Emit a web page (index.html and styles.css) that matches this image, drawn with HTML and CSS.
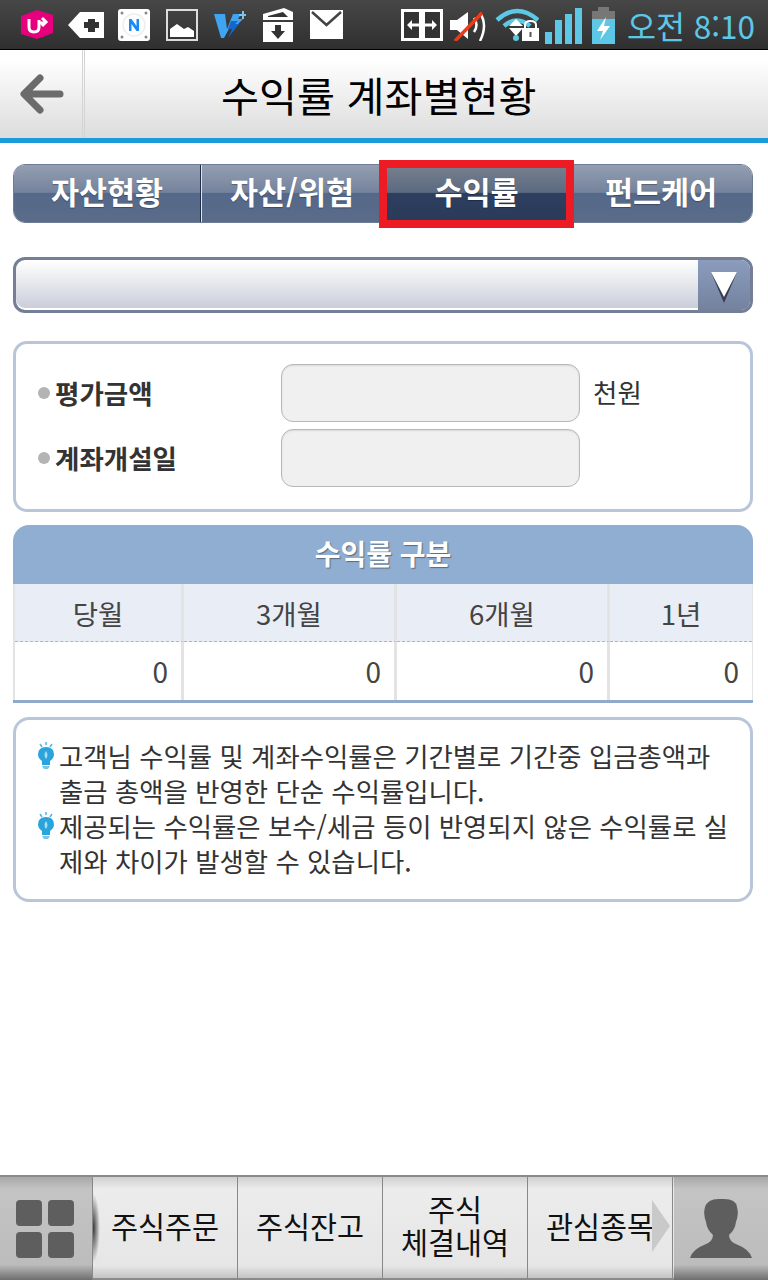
FILE: index.html
```html
<!DOCTYPE html>
<html lang="ko">
<head>
  <meta charset="UTF-8" />
  <meta name="viewport" content="width=device-width, initial-scale=1.0"/>
  <title>수익률 계좌별현황</title>
  <link rel="stylesheet" href="styles.css">
</head>
<body>
  <div class="page">

    <!-- Status bar -->
    <div class="status-bar">
      <div class="status-left">
        <svg width="32" height="30" viewBox="0 0 32 30"><path d="M16 0 32 5V23L16 29 0 24V6Z" fill="#e6007e"/><path d="M8 9V17Q8 22 13 22T18 17V10M18 13H24M21 8 25 12 21 16" fill="none" stroke="#fff" stroke-width="3"/></svg>
        <svg class="tag-icon" width="36" height="30" viewBox="0 0 36 30"><path d="M12 2H36V28H12L0 15Z" fill="#fff"/><path d="M20 9H27V12H31V18H27V22H20V18H16V12H20Z" fill="#333"/></svg>
        <svg width="32" height="32" viewBox="0 0 32 32"><rect width="32" height="32" rx="3" fill="#fff"/><circle cx="16" cy="16" r="11" fill="none" stroke="#eee" stroke-width="1.5"/><circle cx="4" cy="4" r="1.5" fill="#888"/><circle cx="28" cy="4" r="1.5" fill="#888"/><circle cx="4" cy="28" r="1.5" fill="#888"/><circle cx="28" cy="28" r="1.5" fill="#888"/><path d="M11 22V10H13.500L18.500 17V10H21V22H18.500L13.500 15V22Z" fill="#1a8cf0"/></svg>
        <svg width="32" height="32" viewBox="0 0 32 32"><rect x="1" y="1" width="30" height="30" fill="none" stroke="#ddd" stroke-width="2"/><path d="M4 28V20L11 15 18 20 22 18 28 22V28Z" fill="#fff"/></svg>
        <svg width="32" height="28" viewBox="0 0 32 28"><path d="M0 3H11L13 18 19 3H27L24 8H29L23 14 16 16 10 27H7Z" fill="#3fa4f2"/><path d="M17 10H24L21 13H25L14 27 18 18H14Z" fill="#1467c8"/><path d="M25 3H28V0H30V3H32V5H30V8H28V5H25Z" fill="#7fc4ee"/></svg>
        <svg width="32" height="34" viewBox="0 0 32 34"><path d="M1 6 22 0 31 4V12H1Z" fill="#fff"/><path d="M6 8 21 4 26 9H6Z" fill="#333"/><rect x="1" y="14" width="30" height="20" fill="#fff"/><path d="M13 17H19V23H23L16 31 9 23H13Z" fill="#333"/></svg>
        <svg width="33" height="30" viewBox="0 0 33 30"><rect width="33" height="29" fill="#fff"/><path d="M2 2 16.500 15 31 2" fill="none" stroke="#444" stroke-width="2.500"/></svg>
      </div>
      <div class="status-right">
        <svg width="42" height="32" viewBox="0 0 42 32"><path d="M1.500 1.500H19.500V30.500H1.500ZM22.500 1.500H40.500V30.500H22.500Z" fill="#333" stroke="#fff" stroke-width="3"/><path d="M20 2H22V30H20Z" fill="#fff"/><path d="M6 16 11 11V14.500H20V17.500H11V21ZM36 16 31 11V14.500H22V17.500H31V21Z" fill="#fff"/></svg>
        <svg width="38" height="32" viewBox="0 0 38 32"><path d="M0 11H7L18 3V30L7 21H0Z" fill="#fff"/><path d="M24 9Q29 16 24 23M30 4Q38 16 30 32" fill="none" stroke="#fff" stroke-width="2.500"/><path d="M5 32 32 4" stroke="#f03a17" stroke-width="3.500"/></svg>
        <svg width="44" height="34" viewBox="0 0 44 34"><path d="M2 12Q22-6 43 12M9 18Q22 7 35 18" fill="none" stroke="#5cc8e6" stroke-width="4.500"/><path d="M21 11 28 18H14ZM21 28 14 20H28Z" fill="#fff"/><circle cx="21" cy="30" r="3" fill="#5cc8e6"/><rect x="27" y="20" width="17" height="13" fill="#fff"/><path d="M30 20V17Q30 13 35.500 13T41 17V20" fill="none" stroke="#fff" stroke-width="2"/><rect x="34.500" y="24" width="2" height="5" fill="#555"/></svg>
        <div class="signal"><span class="bar-1"></span><span class="bar-2"></span><span class="bar-3"></span><span class="bar-4"></span></div>
        <svg class="battery" width="23" height="37" viewBox="0 0 23 37"><rect x="6" width="11" height="6" fill="#777"/><rect y="4" width="23" height="8" fill="#777"/><rect y="12" width="23" height="25" fill="#5cc8e6"/><path d="M14 10 5 24H11L8 33 18 19H12Z" fill="#fff"/></svg>
        <span class="clock">오전 8:10</span>
      </div>
    </div>

    <!-- Title -->
    <header class="title-bar">
      <div class="back-btn">
        <svg width="44" height="40" viewBox="0 0 44 40"><path d="M20 4 4 20 20 36M5 20H40" fill="none" stroke="#6b6b6b" stroke-width="7" stroke-linecap="round" stroke-linejoin="round"/></svg>
      </div>
      <h1>수익률 계좌별현황</h1>
    </header>

    <main class="content">
      <!-- Tabs -->
      <div class="tabs">
        <div class="tab tab-first">자산현황</div>
        <div class="tab tab-second">자산/위험</div>
        <div class="tab tab-active">수익률</div>
        <div class="tab tab-last">펀드케어</div>
      </div>

      <!-- Account select -->
      <div class="select-box">
        <div class="select-arrow">
          <svg width="28" height="34" viewBox="0 0 28 34"><path d="M1 1H27L14 32Z" fill="#363d4c"/><path d="M1 1H27L14 26Z" fill="#fff"/></svg>
        </div>
      </div>

      <!-- Account summary -->
      <section class="info-box">
        <div class="info-row">
          <span class="info-label">평가금액</span>
          <div class="info-field"></div>
          <span class="info-unit">천원</span>
        </div>
        <div class="info-row">
          <span class="info-label">계좌개설일</span>
          <div class="info-field"></div>
        </div>
      </section>

      <!-- Return table -->
      <section class="return-table">
        <div class="table-title">수익률 구분</div>
        <div class="table-grid">
          <div class="cell-head">당월</div>
          <div class="cell-head">3개월</div>
          <div class="cell-head">6개월</div>
          <div class="cell-head">1년</div>
          <div class="cell-value">0</div>
          <div class="cell-value">0</div>
          <div class="cell-value">0</div>
          <div class="cell-value">0</div>
        </div>
      </section>

      <!-- Notes -->
      <section class="note-box">
        <div class="note">
          <svg class="bulb" width="18" height="29" viewBox="0 0 18 29"><path d="M3 3 5 6M9 1V4M15 3 13 6" stroke="#55b5e0" stroke-width="1.500"/><path d="M9 6Q17 6 17 13.500 17 17 13 20V24H5V20Q1 17 1 13.500 1 6 9 6Z" fill="#2ba3dc"/><path d="M9 10Q12 14 9 18 6 14 9 10Z" fill="#a8def2"/><path d="M5 25H13L11 28H7Z" fill="#7cc4e4"/></svg>
          <p>고객님 수익률 및 계좌수익률은 기간별로 기간중 입금총액과 출금 총액을 반영한 단순 수익률입니다.</p>
        </div>
        <div class="note">
          <svg class="bulb" width="18" height="29" viewBox="0 0 18 29"><path d="M3 3 5 6M9 1V4M15 3 13 6" stroke="#55b5e0" stroke-width="1.500"/><path d="M9 6Q17 6 17 13.500 17 17 13 20V24H5V20Q1 17 1 13.500 1 6 9 6Z" fill="#2ba3dc"/><path d="M9 10Q12 14 9 18 6 14 9 10Z" fill="#a8def2"/><path d="M5 25H13L11 28H7Z" fill="#7cc4e4"/></svg>
          <p>제공되는 수익률은 보수/세금 등이 반영되지 않은 수익률로 실제와 차이가 발생할 수 있습니다.</p>
        </div>
      </section>
    </main>

    <!-- Bottom menu -->
    <nav class="bottom-nav">
      <div class="nav-side nav-menu">
        <div class="menu-grid"><span></span><span></span><span></span><span></span></div>
      </div>
      <div class="nav-item">주식주문</div>
      <div class="nav-item">주식잔고</div>
      <div class="nav-item">주식<br>체결내역</div>
      <div class="nav-item nav-more">관심종목<span class="more-arrow"></span></div>
      <div class="nav-side nav-user">
        <svg width="62" height="62" viewBox="0 0 62 62"><path d="M15 9Q18 0 31 1 46 0 47 9 49 16 46 24 45 32 39 37 39 44 48 47 59 51 62 60H0Q3 51 14 47 23 44 23 37 17 32 16 24 13 16 15 9Z" fill="#5e5e5e"/></svg>
      </div>
    </nav>

  </div>
</body>
</html>
```

FILE: styles.css
```css
* {
  margin: 0;
  padding: 0;
  box-sizing: border-box;
  font-family: "Noto Sans CJK KR", "Noto Sans", sans-serif;
}

body {
  background: #fff;
  color: #333;
}

.page {
  width: 768px;
  height: 1280px;
  display: flex;
  flex-direction: column;
  overflow: hidden;
}

/* Status bar */
.status-bar {
  height: 50px;
  flex-shrink: 0;
  display: flex;
  justify-content: space-between;
  align-items: center;
  padding: 0 13px 0 21px;
  background: linear-gradient(#474747, #2f2f2f);
  border-bottom: 1px solid #000;
}

.status-left {
  display: flex;
  align-items: center;
  gap: 16px;
}

.tag-icon {
  margin: 0 -2px 0 -1px;
}

.status-right {
  display: flex;
  align-items: center;
  gap: 7px;
}

.signal {
  display: flex;
  align-items: flex-end;
  gap: 3px;
  height: 36px;
  margin: 2px 3px 0 -1px;
}

.signal span {
  width: 7px;
  background: #5cc8e6;
}

.bar-1 { height: 12px; }
.bar-2 { height: 24px; }
.bar-3 { height: 30px; }
.bar-4 { height: 36px; }

.battery {
  margin-top: 2px;
}

.clock {
  margin-left: 5px;
  font-size: 31.5px;
  line-height: 40px;
  color: #5cc8e6;
  white-space: nowrap;
}

/* Title */
.title-bar {
  height: 93px;
  flex-shrink: 0;
  display: flex;
  align-items: stretch;
  background: linear-gradient(#fff 10%, #dcdcdc);
  border-bottom: 5px solid #1a9bdc;
}

.back-btn {
  width: 85px;
  flex-shrink: 0;
  display: flex;
  align-items: center;
  padding-left: 20px;
  border-right: 3px double #d4d4d4;
}

.title-bar h1 {
  flex: 1;
  padding-left: 136px;
  font-size: 41.3px;
  font-weight: 400;
  line-height: 88px;
  color: #000;
  white-space: nowrap;
}

.content {
  flex: 1;
  padding: 21px 15px 0 13px;
}

/* Tabs */
.tabs {
  display: flex;
  height: 59px;
  margin-bottom: 34px;
  border: 1px solid #6d7d96;
  border-radius: 12px;
}

.tab {
  display: flex;
  align-items: center;
  justify-content: center;
  padding-bottom: 5px;
  font-size: 30.5px;
  font-weight: 700;
  color: #fff;
  background: linear-gradient(#939eb1, #74839c 48%, #55688a 50%, #5a6c89);
  text-shadow: 0 1px 1px rgba(0, 0, 0, 0.3);
}

.tab-first {
  width: 187px;
  border-radius: 11px 0 0 11px;
  border-right: 1px solid #1f2c44;
}

.tab-second {
  width: 182px;
  box-shadow: inset 1px 0 0 #dfe3ea;
}

.tab-active {
  position: relative;
  width: 187px;
  background: linear-gradient(#76808e, #5c6a80 48%, #2d3f60 50%, #2b3a58);
}

/* the red highlight lies over the tab */
.tab-active::after {
  content: "";
  position: absolute;
  inset: -5px -4px -6px -4px;
  border: 8px solid #ed1c24;
}

.tab-last {
  flex: 1;
  border-radius: 0 11px 11px 0;
}

/* Select */
.select-box {
  display: flex;
  justify-content: flex-end;
  height: 56px;
  margin-bottom: 28px;
  border: 3px solid #747f97;
  border-radius: 12px;
  background: linear-gradient(#fff, #c8ccd8);
  box-shadow: inset 0 -2px 0 #fff;
  overflow: hidden;
}

.select-arrow {
  width: 52px;
  display: flex;
  align-items: center;
  justify-content: center;
  padding-top: 5px;
  background: linear-gradient(#8b9cbd, #74829f);
}

/* Summary */
.info-box {
  height: 171px;
  display: flex;
  flex-direction: column;
  justify-content: center;
  gap: 7px;
  margin-bottom: 13px;
  padding-bottom: 2px;
  border: 3px solid #b9c6d9;
  border-radius: 14px;
}

.info-row {
  display: flex;
  align-items: center;
  height: 58px;
}

.info-label {
  position: relative;
  width: 265px;
  padding: 0 0 2px 39px;
  font-size: 26.5px;
  font-weight: 700;
  color: #333;
}

.info-label::before {
  content: "";
  position: absolute;
  left: 22px;
  top: 50%;
  width: 12px;
  height: 12px;
  margin-top: -6px;
  border-radius: 50%;
  background: #b4b4b4;
}

.info-field {
  width: 299px;
  height: 58px;
  border: 1px solid #b8b8b8;
  border-radius: 12px;
  background: #f0f0f0;
  box-shadow: inset 0 1px 2px rgba(0, 0, 0, 0.1);
}

.info-unit {
  margin-left: 13px;
  padding-bottom: 3px;
  font-size: 26.5px;
  color: #333;
}

/* Return table */
.return-table {
  margin-bottom: 14px;
  border-bottom: 3px solid #8faacb;
}

.table-title {
  height: 59px;
  border-radius: 16px 16px 0 0;
  background: #8faed2;
  text-align: center;
  font-size: 28px;
  font-weight: 700;
  line-height: 57px;
  color: #fff;
  text-shadow: 1px 1px 1px rgba(60, 60, 60, 0.6);
}

.table-grid {
  display: grid;
  grid-template-columns: 169px 213px 213px 1fr;
  border-left: 2px solid #e3e3e3;
  border-right: 1px solid #e3e3e3;
}

.cell-head,
.cell-value {
  border-right: 3px solid #e3e3e3;
  font-size: 28px;
  color: #444;
}

.cell-head {
  height: 58px;
  background: #e9edf5;
  border-bottom: 1px dashed #a9b6c8;
  text-align: center;
  font-size: 27.5px;
  line-height: 58px;
}

.cell-value {
  height: 58px;
  padding-right: 13px;
  text-align: right;
  line-height: 58px;
}

.cell-head:nth-child(4),
.cell-value:nth-child(8) {
  border-right: 0;
}

/* Notes */
.note-box {
  height: 185px;
  padding: 18px 20px 0 21px;
  border: 3px solid #b9c6d9;
  border-radius: 16px;
}

.note {
  position: relative;
  padding-left: 22px;
}

.note p {
  font-size: 26.4px;
  line-height: 35px;
  color: #333;
}

.bulb {
  position: absolute;
  left: 0;
  top: 3px;
}

/* Bottom menu */
.bottom-nav {
  display: flex;
  height: 105px;
  flex-shrink: 0;
  border-top: 2px solid #8a8a8a;
  border-bottom: 2px solid #8a8a8a;
  background: linear-gradient(#cfcfcf, #ececec 12%, #e6e6e6 88%, #c4c4c4);
}

.nav-side {
  display: flex;
  align-items: center;
  justify-content: center;
  margin-bottom: -2px;
  background: linear-gradient(#a8a8a8, #c4c4c4 12%, #bcbcbc 85%, #6e6e6e);
}

.nav-menu {
  position: relative;
  width: 93px;
  padding-right: 3px;
  border-right: 1px solid #888;
}

/* dark glow at the edge of the menu button */
.nav-menu::after {
  content: "";
  position: absolute;
  left: 100%;
  top: 16px;
  width: 7px;
  height: 70px;
  margin-left: 1px;
  background: radial-gradient(ellipse at left center, #333, rgba(80, 80, 80, 0) 70%);
}

.nav-user {
  flex: 1;
  margin-left: 1px;
}

.menu-grid {
  display: grid;
  grid-template-columns: 26px 26px;
  grid-auto-rows: 26px;
  gap: 6px;
}

.menu-grid span {
  border-radius: 4px;
  background: #5e5e5e;
}

.nav-item {
  position: relative;
  width: 145px;
  display: flex;
  align-items: center;
  justify-content: center;
  padding-bottom: 5px;
  text-align: center;
  font-size: 29.4px;
  line-height: 33px;
  color: #111;
  border-right: 1px solid #888;
}

.nav-more {
  justify-content: flex-start;
  padding-left: 18px;
  white-space: nowrap;
}

.more-arrow {
  position: absolute;
  right: 2px;
  top: 23px;
  border-left: 18px solid #c9c9c9;
  border-top: 26px solid transparent;
  border-bottom: 26px solid transparent;
}
```
